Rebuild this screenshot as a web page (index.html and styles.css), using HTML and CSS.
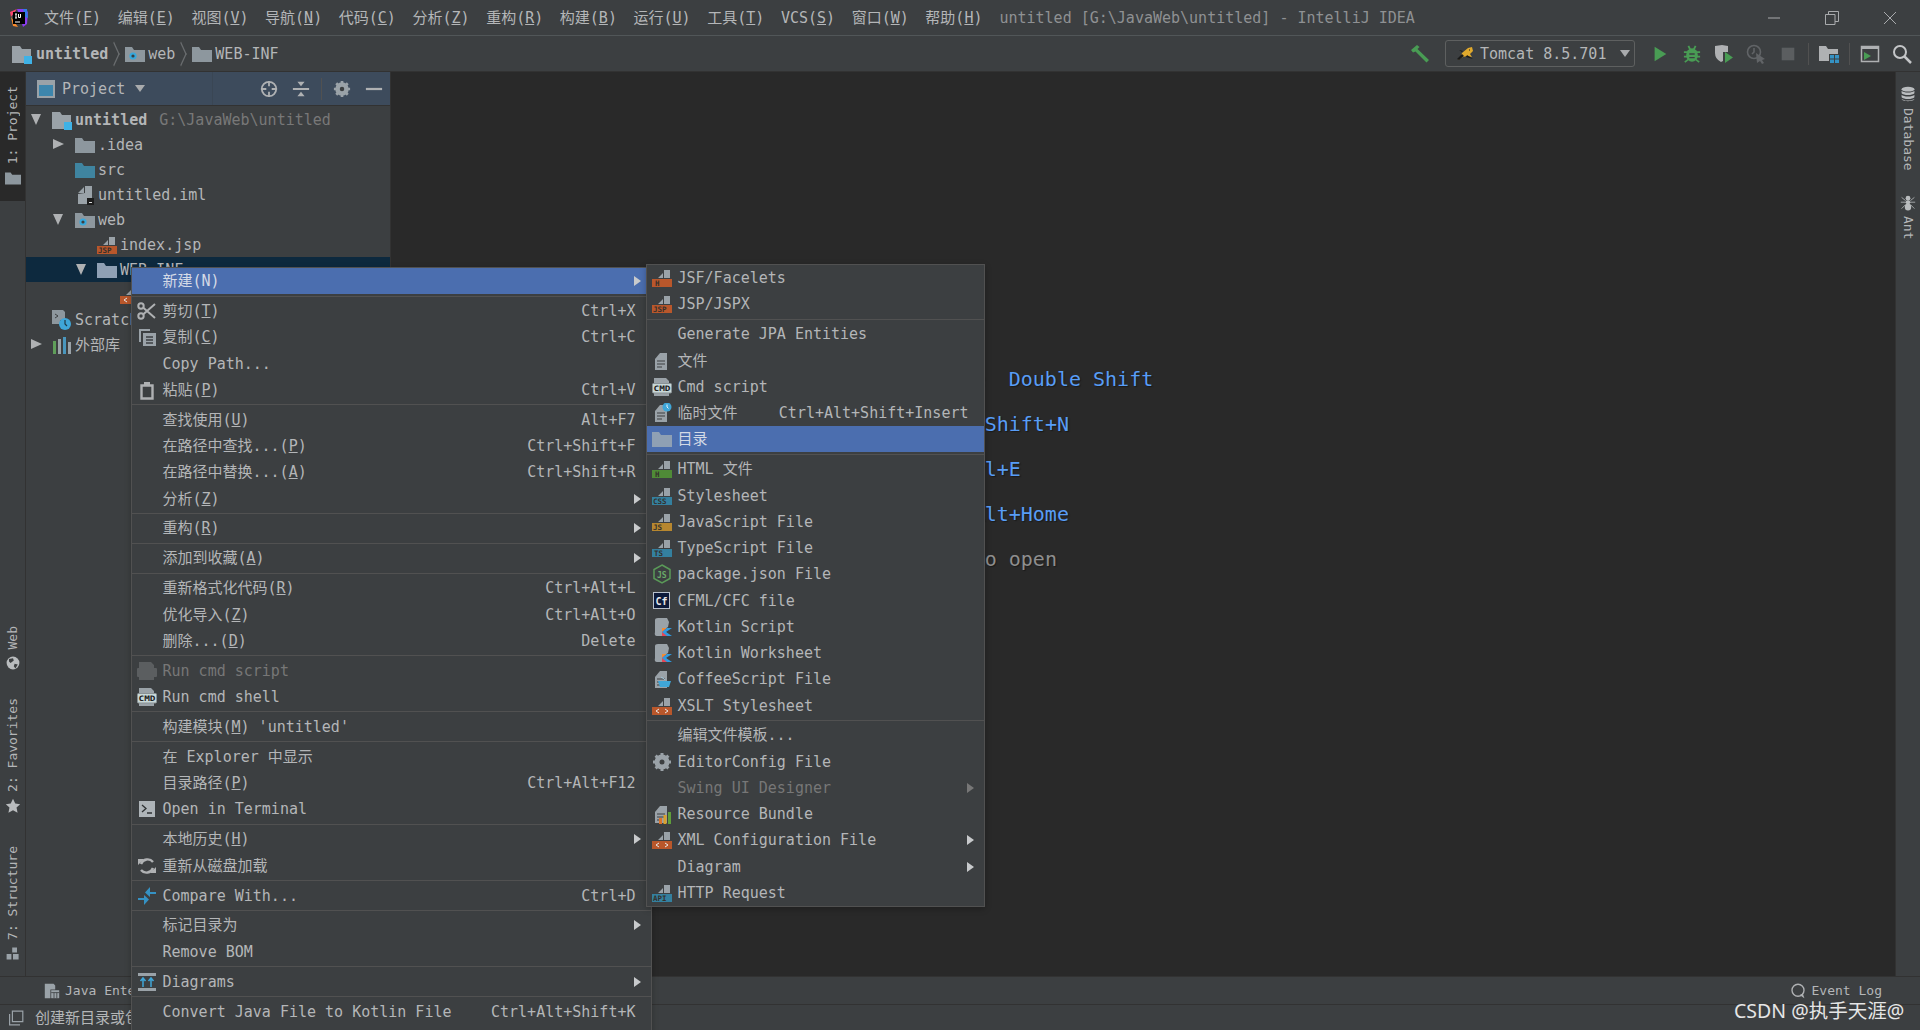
FILE: index.html
```html
<!DOCTYPE html>
<html lang="zh">
<head>
<meta charset="utf-8">
<title>untitled - IntelliJ IDEA</title>
<link rel="stylesheet" href="styles.css">
</head>
<body>
<svg class="defs" aria-hidden="true">
  <symbol id="ft" viewBox="0 0 20 20"><path fill="#9aa2a8" d="M6 10l5-5v5zM12 10V2h6v8z"/></symbol>
  <symbol id="b-or" viewBox="0 0 20 20"><use href="#ft"/><rect x="0" y="11" width="20" height="8" fill="#b9572b"/></symbol>
  <symbol id="b-gr" viewBox="0 0 20 20"><use href="#ft"/><rect x="0" y="11" width="20" height="8" fill="#4f8a37"/></symbol>
  <symbol id="b-bl" viewBox="0 0 20 20"><use href="#ft"/><rect x="0" y="11" width="20" height="8" fill="#34809f"/></symbol>
  <symbol id="b-ye" viewBox="0 0 20 20"><use href="#ft"/><rect x="0" y="11" width="20" height="8" fill="#b7872f"/></symbol>
  <symbol id="b-xml" viewBox="0 0 20 20"><use href="#ft"/><rect x="0" y="11" width="20" height="8" fill="#b9572b"/><path d="M7 13l-3 2 3 2M13 13l3 2-3 2" fill="none" stroke="#e8e8e8" stroke-width="1"/></symbol>
  <symbol id="file" viewBox="0 0 20 20"><path fill="#9aa2a8" d="M3 8l5-6h7v17H3z"/><path stroke="#3c3f41" stroke-width="1.2" d="M5 10h8M5 13h8M5 16h5"/></symbol>
  <symbol id="cmd" viewBox="0 0 20 20"><path fill="#9aa2a8" d="M2 1h12l3 3v4H2zM2 16h15v3H2z"/><rect x="0.500" y="6.500" width="19" height="9.500" rx="1" fill="#c8d8d8" stroke="#8a9296"/></symbol>
  <symbol id="cmd-d" viewBox="0 0 20 20"><path fill="#5b5e60" d="M2 1h12l3 3v4H2zM2 16h15v3H2z"/><rect x="0" y="7" width="20" height="9" rx="1" fill="#5b5e60"/></symbol>
  <symbol id="temp" viewBox="0 0 20 20"><use href="#file"/><circle cx="15" cy="4" r="4.5" fill="#3fa6d8"/><path d="M15 1.5V4l1.5 1.5" fill="none" stroke="#e8f4fa" stroke-width="1"/></symbol>
  <symbol id="folder" viewBox="0 0 20 20"><path fill="#8d979e" d="M0 3h7l2 3h11v12H0z"/></symbol>
  <symbol id="folder-s" viewBox="0 0 20 20"><path fill="#8fa0b4" d="M0 3h7l2 3h11v12H0z"/></symbol>
  <symbol id="folder-b" viewBox="0 0 20 20"><path fill="#3f84a0" d="M0 3h7l2 3h11v12H0z"/></symbol>
  <symbol id="folder-w" viewBox="0 0 20 20"><path fill="#8d979e" d="M0 3h7l2 3h11v12H0z"/><circle cx="8" cy="12" r="3.6" fill="#37a8dc"/><circle cx="8" cy="12" r="1.6" fill="#3c3f41"/></symbol>
  <symbol id="module" viewBox="0 0 20 20"><path fill="#9aa2a8" d="M0 2h8l2 3h9v11H12v3H0z"/><rect x="12" y="12" width="8" height="8" fill="#3fb2e6"/></symbol>
  <symbol id="iml" viewBox="0 0 20 20"><path fill="#9aa2a8" d="M3 8l6-6v6zM10 8V1h7v18H3V9z"/><rect x="12" y="13" width="7" height="7" fill="#1c1c1c"/><rect x="14" y="17" width="3" height="1" fill="#ddd"/></symbol>
  <symbol id="scratch" viewBox="0 0 20 20"><path fill="#8d979e" d="M0 0h11l2 2v8H8v4H0z"/><path d="M3 4l3 2-3 2" fill="none" stroke="#3c3f41"/><circle cx="13" cy="14" r="6" fill="#3fa6d8"/><path d="M13 10v4l2 2" fill="none" stroke="#1e3a48" stroke-width="1.2"/></symbol>
  <symbol id="lib" viewBox="0 0 20 20"><path fill="#5f9e5a" d="M1 6h3v13H1z"/><path fill="#9aa2a8" d="M6 4h3v15H6z"/><path fill="#4a96bd" d="M11 2h3v17h-3z"/><path fill="#9aa2a8" d="M16 7h3v12h-3z"/></symbol>
  <symbol id="scissors" viewBox="0 0 20 20"><g fill="none" stroke="#afb1b3" stroke-width="2"><circle cx="4" cy="5" r="2.7"/><circle cx="4" cy="15" r="2.7"/><path d="M6 6.5L18 17M6 13.5L18 3"/></g></symbol>
  <symbol id="copy" viewBox="0 0 20 20"><path fill="#9aa2a8" d="M2 2h11v2H4v11H2z"/><rect x="6" y="6" width="13" height="13" fill="#9aa2a8"/><path stroke="#3c3f41" stroke-width="1.3" d="M9 10h7M9 13h7M9 16h7"/></symbol>
  <symbol id="paste" viewBox="0 0 20 20"><path fill="none" stroke="#afb1b3" stroke-width="2.4" d="M4.5 5.500h11v13h-11z"/><rect x="7" y="2" width="6" height="4" fill="#afb1b3"/></symbol>
  <symbol id="term" viewBox="0 0 20 20"><rect x="2" y="2" width="16" height="16" fill="#aeb4b8"/><path d="M5 6l4 3.500L5 13M10 14h5" fill="none" stroke="#2e3133" stroke-width="1.3"/></symbol>
  <symbol id="reload" viewBox="0 0 20 20"><g fill="none" stroke="#afb1b3" stroke-width="2.400"><path d="M16 6a7 7 0 0 0-12 2M4 14a7 7 0 0 0 12-2"/></g><path fill="#afb1b3" d="M1 3l6 0-6 6zM19 17h-6l6-6z"/></symbol>
  <symbol id="compare" viewBox="0 0 20 20"><path fill="#3592c4" d="M19 6h-6V1L8 6.500 13 11V8h6zM1 14h6v5l5-5.500L7 9v3H1z"/></symbol>
  <symbol id="diagrams" viewBox="0 0 20 20"><path fill="#9aa2a8" d="M1 1h18v3H1zM1 16h18v3H1z"/><path d="M6 15V7M3.500 9L6 6l2.500 3M14 15V7M11.500 9L14 6l2.500 3" fill="none" stroke="#3fa6d8" stroke-width="1.500"/></symbol>
  <symbol id="gist" viewBox="0 0 20 20"><circle cx="10" cy="10" r="8" fill="#afb1b3"/></symbol>
  <symbol id="node" viewBox="0 0 20 20"><path fill="none" stroke="#5a9a58" stroke-width="1.500" d="M10 1l8 4.500v9L10 19l-8-4.500v-9z"/></symbol>
  <symbol id="cf" viewBox="0 0 20 20"><rect x="1.500" y="1.500" width="16" height="16" fill="#0d1a3a" stroke="#b8c0cc"/></symbol>
  <symbol id="kt-base" viewBox="0 0 20 20"><path fill="#9aa2a8" d="M3 3q0-2 3-2h9l2 4-1 5-3 2-1 7H5q-3 0-2-4z"/></symbol>
  <symbol id="kt" viewBox="0 0 20 20"><use href="#kt-base"/><path fill="#f18e33" d="M10 11h5l-5 4z"/><path fill="#e44857" d="M10 15l3-3 3 7h-6z"/><path fill="#2f9ae0" d="M15 11h5l-6 4 6 4h-5l-5-4z"/></symbol>
  <symbol id="coffee" viewBox="0 0 20 20"><use href="#file"/><path fill="#3fa6d8" d="M6 12h13l-2 6h-9z"/><path fill="none" stroke="#9fc6dc" d="M9 8c1 1 3 1 4 3"/></symbol>
  <symbol id="gear" viewBox="0 0 20 20"><circle cx="10" cy="10" r="5.500" fill="none" stroke="#9aa2a8" stroke-width="4"/><path stroke="#9aa2a8" stroke-width="3" d="M10 1v18M1 10h18M3.600 3.600l12.800 12.800M16.400 3.600L3.600 16.400"/><circle cx="10" cy="10" r="2.500" fill="#3c3f41"/></symbol>
  <symbol id="bundle" viewBox="0 0 20 20"><use href="#file"/><rect x="7" y="14" width="3" height="6" fill="#d9732c"/><rect x="11.500" y="11" width="3" height="9" fill="#d9a02c"/><rect x="16" y="8" width="3" height="12" fill="#5f9e3a"/></symbol>
  <symbol id="logo" viewBox="0 0 20 20"><path fill="#f9466e" d="M1 4l7-3-6 8z"/><path fill="#f98a2b" d="M1 5l3 13 5 1-7-10z"/><path fill="#8a3cf0" d="M8 1h8l3 3-1 12-4 3z"/><path fill="#2f7ce8" d="M14 1h4l1 9-3-1z"/><rect x="4" y="4" width="12" height="12" fill="#000"/><path stroke="#fff" stroke-width="1" d="M6 6h2M7 6v4M6 10h2M9.500 6v3.500h2V6M6 14h5"/></symbol>
  <symbol id="hammer" viewBox="0 0 20 20"><path fill="#499c54" d="M1 6l6-5 2.500 2-2 2L19 16l-2.500 2.500L5.500 7.500 3 8.500z"/></symbol>
  <symbol id="tomcat" viewBox="0 0 20 20"><path fill="#e0a92c" d="M7 9l6-5 4-1 1 4-3 3 2 3-5-1-4 1-5 3 3-4z"/><path fill="#1a1a1a" d="M2 15l5-5 2 2-5 4zM12 11l6 4-7-2zM14 5l1 1-1 1zM7 8L4 6l4 1z"/></symbol>
  <symbol id="run" viewBox="0 0 20 20"><path fill="#499c54" d="M4 2l13 8-13 8z"/></symbol>
  <symbol id="bug" viewBox="0 0 20 20"><ellipse cx="10" cy="11" rx="6.500" ry="7.500" fill="#499c54"/><path stroke="#499c54" stroke-width="2" d="M6 1l2 4M14 1l-2 4M1 8h18M1 13h18M2 19l4-3M18 19l-4-3"/><path stroke="#3c3f41" stroke-width="1.500" d="M7 10h6M7 14h6"/></symbol>
  <symbol id="cov" viewBox="0 0 20 20"><path fill="#afb1b3" d="M1 2l7-1 6 1v6H9v9l-2 1q-6-3-6-9z"/><path fill="#499c54" d="M11 8l8 5.500-8 5.500z"/></symbol>
  <symbol id="prof" viewBox="0 0 20 20"><g fill="none" stroke="#616467" stroke-width="1.600"><circle cx="8" cy="8" r="6.500"/><path d="M8 4v4l-2 2"/></g><path fill="#616467" d="M10 9l9 6-3 1 2 3-2 1-2-3-3 2z"/></symbol>
  <symbol id="stop" viewBox="0 0 20 20"><rect x="3" y="3" width="14" height="14" fill="#5b5e60"/></symbol>
  <symbol id="pstruct" viewBox="0 0 20 20"><path fill="#afb1b3" d="M0 2h7l2 3h10v5H10v7H0z"/><path fill="#3592c4" d="M11 11h4v3.500h-4zM16 11h4v3.500h-4zM16 15.500h4V19h-4zM11 15.500h4V19h-4z"/></symbol>
  <symbol id="runterm" viewBox="0 0 20 20"><path fill="none" stroke="#afb1b3" stroke-width="1.500" d="M1.500 2.500h17v15h-17z"/><path fill="#afb1b3" d="M1 2h18v3H1z"/><path fill="#499c54" d="M4 8l7 4-7 4z"/></symbol>
  <symbol id="search" viewBox="0 0 20 20"><circle cx="8" cy="8" r="6" fill="none" stroke="#c4c6c8" stroke-width="2"/><path stroke="#c4c6c8" stroke-width="2.500" d="M12.500 12.500L19 19"/></symbol>
  <symbol id="locate" viewBox="0 0 20 20"><circle cx="10" cy="10" r="8" fill="none" stroke="#afb1b3" stroke-width="2"/><path stroke="#afb1b3" stroke-width="2" d="M10 1v6M10 13v6M1 10h6M13 10h6"/></symbol>
  <symbol id="collapse" viewBox="0 0 20 20"><path fill="#afb1b3" d="M1 9h18v2H1zM6 2h8l-4 5zM10 13l4 5H6z"/></symbol>
  <symbol id="projwin" viewBox="0 0 20 20"><rect x="1" y="1" width="18" height="18" fill="#9aa2a8"/><rect x="3" y="6" width="14" height="11" fill="#3d86ad"/></symbol>
  <symbol id="globe" viewBox="0 0 20 20"><circle cx="10" cy="10" r="8" fill="#b9bcbe"/><path fill="#3c3f41" d="M5 5l5-1 1 3-4 3-2-2zM12 11l4 1-3 5-2-3z"/></symbol>
  <symbol id="star" viewBox="0 0 20 20"><path fill="#b9bcbe" d="M10 1l2.800 6 6.200.7-4.600 4.300 1.300 6.500L10 15.300l-5.700 3.200L5.600 12 1 7.700 7.200 7z"/></symbol>
  <symbol id="struct" viewBox="0 0 20 20"><path fill="#9aa2a8" d="M9 2h6v6H9zM2 10h6v7H2zM10 10h7v7h-7z"/></symbol>
  <symbol id="db" viewBox="0 0 20 20"><g fill="#b9bcbe"><ellipse cx="10" cy="4" rx="8" ry="3"/><path d="M2 6c2 3 14 3 16 0v3c-2 3-14 3-16 0zM2 11c2 3 14 3 16 0v3c-2 3-14 3-16 0z"/><path d="M2 16c2 3 14 3 16 0 0 4-16 4-16 0z"/></g></symbol>
  <symbol id="ant" viewBox="0 0 20 20"><g fill="#b9bcbe"><circle cx="10" cy="4" r="3"/><ellipse cx="10" cy="9" rx="3" ry="2.500"/><ellipse cx="10" cy="15" rx="4" ry="4.500"/></g><path stroke="#b9bcbe" d="M2 3l5 4M18 3l-5 4M1 9h6M19 9h-6M2 17l5-5M18 17l-5-5" fill="none"/></symbol>
  <symbol id="jee" viewBox="0 0 20 20"><path fill="#9aa2a8" d="M1 1h11l2 2v5H8v11H1z"/><rect x="9" y="9" width="10" height="10" fill="#9aa2a8"/><path stroke="#3c3f41" d="M9 12h10M12.500 12v7M16 12v7"/></symbol>
  <symbol id="copyframe" viewBox="0 0 20 20"><path fill="none" stroke="#9aa2a8" stroke-width="1.500" d="M5.500 1.500h13v13h-13zM2 5v13.500h13"/></symbol>
  <symbol id="evlog" viewBox="0 0 20 20"><circle cx="10" cy="9" r="7.500" fill="none" stroke="#afb1b3" stroke-width="1.700"/><path fill="#afb1b3" d="M12 15l6 4-2-6z"/></symbol>
</svg>

<div class="app">
  <header class="titlebar">
    <svg class="logo"><use href="#logo"/></svg>
    <nav class="mainmenu">
      <span>文件(<u>F</u>)</span><span>编辑(<u>E</u>)</span><span>视图(<u>V</u>)</span><span>导航(<u>N</u>)</span><span>代码(<u>C</u>)</span><span>分析(<u>Z</u>)</span><span>重构(<u>R</u>)</span><span>构建(<u>B</u>)</span><span>运行(<u>U</u>)</span><span>工具(<u>T</u>)</span><span>VCS(<u>S</u>)</span><span>窗口(<u>W</u>)</span><span>帮助(<u>H</u>)</span>
    </nav>
    <div class="wintitle">untitled [G:\JavaWeb\untitled] - IntelliJ IDEA</div>
    <div class="winctl">
      <span class="wbtn"><svg width="14" height="14" viewBox="0 0 14 14"><path d="M1 7h12" stroke="#a9abad"/></svg></span>
      <span class="wbtn"><svg width="14" height="14" viewBox="0 0 14 14"><path d="M.5 3.500h9.500v10H.5zM3.500 3.500V.5h10v10H10" fill="none" stroke="#a9abad"/></svg></span>
      <span class="wbtn"><svg width="14" height="14" viewBox="0 0 14 14"><path d="M1 1l12 12M13 1L1 13" stroke="#a9abad"/></svg></span>
    </div>
  </header>

  <div class="navbar">
    <div class="crumbs">
      <svg class="ic"><use href="#module"/></svg><b>untitled</b><span class="chev"></span>
      <svg class="ic"><use href="#folder-w"/></svg><span>web</span><span class="chev"></span>
      <svg class="ic"><use href="#folder"/></svg><span>WEB-INF</span>
    </div>
    <div class="tools">
      <span class="tool"><svg class="ic"><use href="#hammer"/></svg></span>
      <div class="combo"><svg class="ic"><use href="#tomcat"/></svg><span>Tomcat 8.5.701</span><i class="down"></i></div>
      <span class="tool"><svg class="ic sm"><use href="#run"/></svg></span>
      <span class="tool"><svg class="ic sm"><use href="#bug"/></svg></span>
      <span class="tool"><svg class="ic"><use href="#cov"/></svg></span>
      <span class="tool"><svg class="ic"><use href="#prof"/></svg></span>
      <span class="tool"><svg class="ic sm"><use href="#stop"/></svg></span>
      <span class="vsep"></span>
      <span class="tool"><svg class="ic"><use href="#pstruct"/></svg></span>
      <span class="vsep"></span>
      <span class="tool"><svg class="ic"><use href="#runterm"/></svg></span>
      <span class="tool"><svg class="ic"><use href="#search"/></svg></span>
    </div>
  </div>

  <main class="workspace">
    <aside class="strip strip-left">
      <div class="vtab vtab-active"><span class="vt">1: Project</span><svg class="si"><use href="#folder"/></svg></div>
      <div class="vtab vtab-web"><span class="vt">Web</span><svg class="si"><use href="#globe"/></svg></div>
      <div class="vtab vtab-fav"><span class="vt">2: Favorites</span><svg class="si"><use href="#star"/></svg></div>
      <div class="vtab vtab-str"><span class="vt">7: Structure</span><svg class="si"><use href="#struct"/></svg></div>
    </aside>

    <section class="project">
      <div class="phead">
        <div class="phead-left"><svg class="ic"><use href="#projwin"/></svg><span>Project</span><i class="down"></i></div>
        <div class="phead-right">
          <span class="hbtn"><svg class="ic sm"><use href="#locate"/></svg></span>
          <span class="hbtn"><svg class="ic sm"><use href="#collapse"/></svg></span>
          <span class="vsep"></span>
          <span class="hbtn"><svg class="ic sm"><use href="#gear"/></svg></span>
          <span class="hbtn"><svg class="ic sm" viewBox="0 0 20 20"><path d="M1 10h18" stroke="#afb1b3" stroke-width="2.500"/></svg></span>
        </div>
      </div>
      <div class="tree">
        <div class="tr l0"><i class="tw open"></i><svg class="ic"><use href="#module"/></svg><b>untitled</b><span class="path">G:\JavaWeb\untitled</span></div>
        <div class="tr l1"><i class="tw closed"></i><svg class="ic"><use href="#folder"/></svg><span>.idea</span></div>
        <div class="tr l1"><i class="tw"></i><svg class="ic"><use href="#folder-b"/></svg><span>src</span></div>
        <div class="tr l1"><i class="tw"></i><svg class="ic"><use href="#iml"/></svg><span>untitled.iml</span></div>
        <div class="tr l1"><i class="tw open"></i><svg class="ic"><use href="#folder-w"/></svg><span>web</span></div>
        <div class="tr l2"><i class="tw"></i><svg class="ic"><use href="#b-or"/><text x="1" y="18" class="bt">JSP</text></svg><span>index.jsp</span></div>
        <div class="tr l2 tr-sel"><i class="tw open"></i><svg class="ic"><use href="#folder-s"/></svg><span>WEB-INF</span></div>
        <div class="tr l3"><i class="tw"></i><svg class="ic"><use href="#b-xml"/></svg><span>web.xml</span></div>
        <div class="tr l0"><i class="tw"></i><svg class="ic"><use href="#scratch"/></svg><span>Scratches and Consoles</span></div>
        <div class="tr l0"><i class="tw closed"></i><svg class="ic"><use href="#lib"/></svg><span>外部库</span></div>
      </div>
    </section>

    <section class="editor">
      <div class="hint"><span class="hk hk-wide">Search Everywhere</span> <span class="hv">Double Shift</span></div>
      <div class="hint"><span class="hk">Go to File</span> <span class="hv">Ctrl+Shift+N</span></div>
      <div class="hint"><span class="hk">Recent Files</span> <span class="hv">Ctrl+E</span></div>
      <div class="hint"><span class="hk">Navigation Bar</span> <span class="hv">Alt+Home</span></div>
      <div class="hint hint-drop"><span class="hk">Drop files here to open</span></div>
    </section>

    <aside class="strip strip-right">
      <div class="rtab"><svg class="si"><use href="#db"/></svg><span class="vr">Database</span></div>
      <div class="rtab rtab-ant"><svg class="si"><use href="#ant"/></svg><span class="vr">Ant</span></div>
    </aside>
  </main>

  <div class="toolbar">
    <span class="jee"><svg class="si"><use href="#jee"/></svg><span>Java Enterprise</span></span>
    <span class="evlog"><svg class="si"><use href="#evlog"/></svg><span>Event Log</span></span>
  </div>
  <footer class="status">
    <svg class="si"><use href="#copyframe"/></svg><span>创建新目录或包</span>
  </footer>

  <div class="menu menu-main">
    <div class="mi sel"><span class="ic"></span><span class="lb">新建(N)</span><i class="arr"></i></div>
    <div class="sep"></div>
    <div class="mi"><svg class="ic"><use href="#scissors"/></svg><span class="lb">剪切(<u>T</u>)</span><span class="sc">Ctrl+X</span></div>
    <div class="mi"><svg class="ic"><use href="#copy"/></svg><span class="lb">复制(<u>C</u>)</span><span class="sc">Ctrl+C</span></div>
    <div class="mi"><span class="ic"></span><span class="lb">Copy Path...</span></div>
    <div class="mi"><svg class="ic"><use href="#paste"/></svg><span class="lb">粘贴(<u>P</u>)</span><span class="sc">Ctrl+V</span></div>
    <div class="sep"></div>
    <div class="mi"><span class="ic"></span><span class="lb">查找使用(<u>U</u>)</span><span class="sc">Alt+F7</span></div>
    <div class="mi"><span class="ic"></span><span class="lb">在路径中查找...(<u>P</u>)</span><span class="sc">Ctrl+Shift+F</span></div>
    <div class="mi"><span class="ic"></span><span class="lb">在路径中替换...(<u>A</u>)</span><span class="sc">Ctrl+Shift+R</span></div>
    <div class="mi"><span class="ic"></span><span class="lb">分析(<u>Z</u>)</span><i class="arr"></i></div>
    <div class="sep"></div>
    <div class="mi"><span class="ic"></span><span class="lb">重构(<u>R</u>)</span><i class="arr"></i></div>
    <div class="sep"></div>
    <div class="mi"><span class="ic"></span><span class="lb">添加到收藏(<u>A</u>)</span><i class="arr"></i></div>
    <div class="sep"></div>
    <div class="mi"><span class="ic"></span><span class="lb">重新格式化代码(<u>R</u>)</span><span class="sc">Ctrl+Alt+L</span></div>
    <div class="mi"><span class="ic"></span><span class="lb">优化导入(<u>Z</u>)</span><span class="sc">Ctrl+Alt+O</span></div>
    <div class="mi"><span class="ic"></span><span class="lb">删除...(<u>D</u>)</span><span class="sc">Delete</span></div>
    <div class="sep"></div>
    <div class="mi dis"><svg class="ic"><use href="#cmd-d"/></svg><span class="lb">Run cmd script</span></div>
    <div class="mi"><svg class="ic"><use href="#cmd"/><text x="1.500" y="14" textLength="17" lengthAdjust="spacingAndGlyphs" class="bk">CMD</text></svg><span class="lb">Run cmd shell</span></div>
    <div class="sep"></div>
    <div class="mi"><span class="ic"></span><span class="lb">构建模块(<u>M</u>) 'untitled'</span></div>
    <div class="sep"></div>
    <div class="mi"><span class="ic"></span><span class="lb">在 Explorer 中显示</span></div>
    <div class="mi"><span class="ic"></span><span class="lb">目录路径(<u>P</u>)</span><span class="sc">Ctrl+Alt+F12</span></div>
    <div class="mi"><svg class="ic"><use href="#term"/></svg><span class="lb">Open in Terminal</span></div>
    <div class="sep"></div>
    <div class="mi"><span class="ic"></span><span class="lb">本地历史(<u>H</u>)</span><i class="arr"></i></div>
    <div class="mi"><svg class="ic"><use href="#reload"/></svg><span class="lb">重新从磁盘加载</span></div>
    <div class="sep"></div>
    <div class="mi"><svg class="ic"><use href="#compare"/></svg><span class="lb">Compare With...</span><span class="sc">Ctrl+D</span></div>
    <div class="sep"></div>
    <div class="mi"><span class="ic"></span><span class="lb">标记目录为</span><i class="arr"></i></div>
    <div class="mi"><span class="ic"></span><span class="lb">Remove BOM</span></div>
    <div class="sep"></div>
    <div class="mi"><svg class="ic"><use href="#diagrams"/></svg><span class="lb">Diagrams</span><i class="arr"></i></div>
    <div class="sep"></div>
    <div class="mi"><span class="ic"></span><span class="lb">Convert Java File to Kotlin File</span><span class="sc">Ctrl+Alt+Shift+K</span></div>
    <div class="mi"><svg class="ic"><use href="#gist"/></svg><span class="lb">Create Gist...</span></div>
  </div>

  <div class="menu menu-sub">
    <div class="mi"><svg class="ic"><use href="#b-or"/><text x="3" y="18" class="bt">H</text></svg><span class="lb">JSF/Facelets</span></div>
    <div class="mi"><svg class="ic"><use href="#b-or"/><text x="1" y="18" class="bt">JSP</text></svg><span class="lb">JSP/JSPX</span></div>
    <div class="sep"></div>
    <div class="mi"><span class="ic"></span><span class="lb">Generate JPA Entities</span></div>
    <div class="mi"><svg class="ic"><use href="#file"/></svg><span class="lb">文件</span></div>
    <div class="mi"><svg class="ic"><use href="#cmd"/><text x="1.500" y="14" textLength="17" lengthAdjust="spacingAndGlyphs" class="bk">CMD</text></svg><span class="lb">Cmd script</span></div>
    <div class="mi"><svg class="ic"><use href="#temp"/></svg><span class="lb">临时文件</span><span class="sc">Ctrl+Alt+Shift+Insert</span></div>
    <div class="mi sel"><svg class="ic"><use href="#folder-s"/></svg><span class="lb">目录</span></div>
    <div class="sep"></div>
    <div class="mi"><svg class="ic"><use href="#b-gr"/><text x="3" y="18" class="bt">H</text></svg><span class="lb">HTML 文件</span></div>
    <div class="mi"><svg class="ic"><use href="#b-bl"/><text x="1" y="18" class="bt">CSS</text></svg><span class="lb">Stylesheet</span></div>
    <div class="mi"><svg class="ic"><use href="#b-ye"/><text x="1" y="18" class="bt">JS</text></svg><span class="lb">JavaScript File</span></div>
    <div class="mi"><svg class="ic"><use href="#b-bl"/><text x="2" y="18" class="bt">TS</text></svg><span class="lb">TypeScript File</span></div>
    <div class="mi"><svg class="ic"><use href="#node"/><text x="5" y="14" class="gn">JS</text></svg><span class="lb">package.json File</span></div>
    <div class="mi"><svg class="ic"><use href="#cf"/><text x="3.500" y="14" class="wh">Cf</text></svg><span class="lb">CFML/CFC file</span></div>
    <div class="mi"><svg class="ic"><use href="#kt"/></svg><span class="lb">Kotlin Script</span></div>
    <div class="mi"><svg class="ic"><use href="#kt"/></svg><span class="lb">Kotlin Worksheet</span></div>
    <div class="mi"><svg class="ic"><use href="#coffee"/></svg><span class="lb">CoffeeScript File</span></div>
    <div class="mi"><svg class="ic"><use href="#b-xml"/></svg><span class="lb">XSLT Stylesheet</span></div>
    <div class="sep"></div>
    <div class="mi"><span class="ic"></span><span class="lb">编辑文件模板...</span></div>
    <div class="mi"><svg class="ic"><use href="#gear"/></svg><span class="lb">EditorConfig File</span></div>
    <div class="mi dis"><span class="ic"></span><span class="lb">Swing UI Designer</span><i class="arr"></i></div>
    <div class="mi"><svg class="ic"><use href="#bundle"/></svg><span class="lb">Resource Bundle</span></div>
    <div class="mi"><svg class="ic"><use href="#b-xml"/></svg><span class="lb">XML Configuration File</span><i class="arr"></i></div>
    <div class="mi"><span class="ic"></span><span class="lb">Diagram</span><i class="arr"></i></div>
    <div class="mi"><svg class="ic"><use href="#b-bl"/><text x="1" y="18" class="bt">API</text></svg><span class="lb">HTTP Request</span></div>
  </div>

  <div class="watermark">CSDN @执手天涯@</div>
</div>
</body>
</html>
```
FILE: styles.css
```css
* { box-sizing: border-box; }
html, body { margin: 0; height: 100%; background: #3c3f41; }
body {
  font-family: "DejaVu Sans Mono", "Noto Sans CJK SC", monospace;
  font-size: 15px;
  line-height: 20px;
  color: #b4b6b8;
  overflow: hidden;
}
.defs { position: absolute; width: 0; height: 0; }
.bt { font: bold 7.5px "DejaVu Sans Mono", monospace; fill: #35302c; }
.bk { font: bold 7.5px "DejaVu Sans Mono", monospace; fill: #1c2020; }
.gn { font: bold 8px "DejaVu Sans Mono", monospace; fill: #6aa868; }
.wh { font: bold 10px "DejaVu Sans Mono", monospace; fill: #e8e8e8; }
u { text-underline-offset: 1px; }

.app {
  position: relative;
  width: 1920px;
  height: 1030px;
  overflow: hidden;
  display: flex;
  flex-direction: column;
  white-space: nowrap;
}
.ic { width: 20px; height: 20px; flex: none; display: block; }
.ic.sm { width: 18px; height: 18px; }
.si { width: 16px; height: 16px; flex: none; display: block; }

/* title bar */
.titlebar {
  height: 36px;
  flex: none;
  display: flex;
  align-items: center;
  border-bottom: 1px solid #515658;
  padding-left: 9px;
}
.logo { width: 20px; height: 20px; margin-right: 15px; flex: none; }
.mainmenu { display: flex; gap: 16.6px; }
.wintitle { margin-left: 17px; color: #8f9193; }
.winctl { margin-left: auto; display: flex; padding-right: 1px; }
.wbtn { width: 58px; display: flex; justify-content: center; }

/* navigation bar */
.navbar {
  height: 36px;
  flex: none;
  display: flex;
  align-items: center;
  justify-content: space-between;
  border-bottom: 1px solid #323232;
  padding-left: 12px;
  padding-right: 2px;
}
.crumbs { display: flex; align-items: center; }
.crumbs b { margin-left: 4px; }
.crumbs .ic + span { margin-left: 3px; }
.chev {
  width: 8px;
  height: 8px;
  margin: 0 7px 0 2px;
  border-top: 1px solid #6a6d6f;
  border-right: 1px solid #6a6d6f;
  transform: scaleY(2.2) rotate(45deg);
}
.tools { display: flex; align-items: center; }
.tool { width: 32px; display: flex; justify-content: center; }
.vsep { width: 1px; height: 22px; background: #515151; margin: 0 4px; flex: none; }
.combo {
  width: 190px;
  height: 27px;
  margin: 0 9px;
  display: flex;
  align-items: center;
  padding-left: 9px;
  gap: 5px;
  border: 1px solid #5e6060;
  border-radius: 3px;
}
.combo .down { margin-left: 9px; }
.down {
  width: 0;
  height: 0;
  border-left: 5px solid transparent;
  border-right: 5px solid transparent;
  border-top: 7px solid #a9abad;
  flex: none;
}

/* workspace */
.workspace { flex: 1; min-height: 0; display: flex; }
.strip { flex: none; width: 25px; display: flex; flex-direction: column; align-items: center; font-size: 13px; }
.strip-left { width: 26px; border-right: 1px solid #323232; }
.strip-right { border-left: 1px solid #323232; padding-top: 14px; }
.vtab { display: flex; flex-direction: column; align-items: center; gap: 6px; width: 100%; }
.vt { writing-mode: vertical-rl; transform: rotate(180deg); line-height: 16px; }
.vr { writing-mode: vertical-rl; line-height: 16px; }
.vtab-active { height: 129px; padding-top: 14px; background: #292929; }
.vtab-web { margin-top: 425px; }
.vtab-fav { margin-top: 27px; }
.vtab-str { margin-top: 32px; }
.rtab { display: flex; flex-direction: column; align-items: center; gap: 6px; }
.rtab-ant { margin-top: 24px; gap: 5px; }

/* project panel */
.project { width: 365px; flex: none; border-right: 1px solid #323232; }
.phead {
  height: 34px;
  display: flex;
  align-items: stretch;
  background: #3d4b5c;
  border-bottom: 1px solid #323232;
}
.phead-left {
  width: 187px;
  display: flex;
  align-items: center;
  padding-left: 10px;
  gap: 6px;
  border-right: 1px solid #3a4654;
}
.phead-left .down { margin-left: 4px; }
.phead-right { margin-left: auto; display: flex; align-items: center; }
.hbtn { width: 32px; display: flex; justify-content: center; }
.tree { padding-top: 1px; }
.tr { height: 25px; display: flex; align-items: center; }
.tr .ic { margin-right: 3px; }
.l0 { padding-left: 5px; }
.l1 { padding-left: 27px; }
.l2 { padding-left: 50px; }
.l3 { padding-left: 73px; }
.tr-sel { background: #0d293e; }
.path { margin-left: 12px; color: #787878; }
.tw { width: 21px; height: 11px; flex: none; display: block; position: relative; }
.l1 > .tw { width: 22px; }
.tw.open::before {
  content: "";
  display: block;
  width: 0;
  border-left: 5.5px solid transparent;
  border-right: 5.5px solid transparent;
  border-top: 11px solid #afb1b3;
}
.tw.closed::before {
  content: "";
  display: block;
  width: 0;
  border-top: 5.5px solid transparent;
  border-bottom: 5.5px solid transparent;
  border-left: 11px solid #afb1b3;
}

/* editor */
.editor {
  flex: 1;
  min-width: 0;
  background: #292929;
  padding: 285px 0 0 401px;
  font-size: 20px;
}
.hint { height: 45px; line-height: 45px; text-shadow: 1px 1px 1px #1a1a1a; }
.hk { color: #8e8e8e; }
.hk-wide { margin-left: -12px; margin-right: 12px; }
.hv { color: #589df6; }
.hint-drop { margin-left: -12px; }

/* bottom */
.toolbar {
  height: 28px;
  flex: none;
  display: flex;
  align-items: center;
  justify-content: space-between;
  border-top: 1px solid #323232;
  font-size: 13px;
  padding-left: 44px;
}
.jee, .evlog { display: flex; align-items: center; gap: 5px; }
.evlog { margin-right: 38px; gap: 6px; }
.status {
  height: 26px;
  flex: none;
  display: flex;
  align-items: center;
  gap: 11px;
  border-top: 1px solid #323232;
  padding-left: 8px;
}

/* context menus */
.menu {
  position: absolute;
  background: #3c3f41;
  border: 1px solid #515151;
  box-shadow: 0 2px 6px rgba(0, 0, 0, .25);
}
.menu-main { left: 131px; top: 267px; width: 521px; border-bottom: 0; }
.menu-sub { left: 646px; top: 264px; width: 339px; }
.mi {
  height: 26.25px;
  display: flex;
  align-items: center;
  padding: 0 10.5px 0 5px;
}
.mi .ic { margin-right: 5.5px; }
.lb { flex: 1; }
.sc { margin-right: 5px; }
.arr {
  width: 0;
  height: 0;
  border-top: 5.5px solid transparent;
  border-bottom: 5.5px solid transparent;
  border-left: 7px solid #c8cacc;
  flex: none;
}
.sep { height: 1px; margin: 1.35px 0; background: #515151; }
.sel { background: #4b6eaf; color: #d4dae6; }
.dis { color: #777777; }
.dis .arr { border-left-color: #777777; }

.watermark {
  position: absolute;
  left: 1734px;
  top: 997px;
  font: 19.5px/28px "Noto Sans", "Noto Sans CJK SC", sans-serif;
  color: #e6e6e6;
}
```
